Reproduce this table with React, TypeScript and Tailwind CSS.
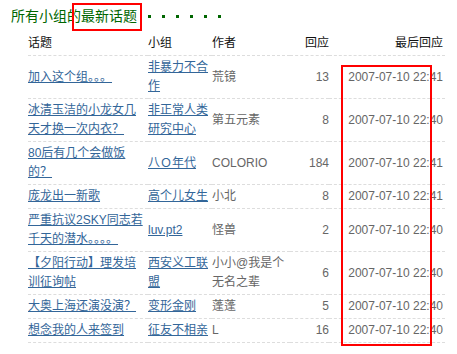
type Topic = {
  title: string;
  group: string;
  author: string;
  replies: number;
  last: string;
};

const topics: Topic[] = [
  { title: '加入这个组。。。', group: '非暴力不合作', author: '荒镜', replies: 13, last: '2007-07-10 22:41' },
  { title: '冰清玉洁的小龙女几天才换一次内衣？', group: '非正常人类研究中心', author: '第五元素', replies: 8, last: '2007-07-10 22:40' },
  { title: '80后有几个会做饭的？', group: '八Ｏ年代', author: 'COLORIO', replies: 184, last: '2007-07-10 22:41' },
  { title: '庞龙出一新歌', group: '高个儿女生', author: '小北', replies: 8, last: '2007-07-10 22:41' },
  { title: '严重抗议2SKY同志若千天的潜水。。。。', group: 'luv.pt2', author: '怪兽', replies: 2, last: '2007-07-10 22:40' },
  { title: '【夕阳行动】理发培训征询帖', group: '西安义工联盟', author: '小小@我是个无名之辈', replies: 6, last: '2007-07-10 22:40' },
  { title: '大奥上海还演没演？', group: '变形金刚', author: '蓬蓬', replies: 5, last: '2007-07-10 22:40' },
  { title: '想念我的人来签到', group: '征友不相亲', author: 'L', replies: 16, last: '2007-07-10 22:40' },
];

const cell = 'py-[2px] border-b border-dashed border-[#dddddd] align-middle';

function App() {
  return (
    <div className="relative w-[457px] h-[354px] bg-white text-[12px] leading-[19px] font-['Liberation_Sans','Noto_Sans_CJK_SC',sans-serif] overflow-hidden">
      <h2 className="h-[32px] pl-[11px] flex items-center text-[14px] font-normal text-[#006600]">
        所有小组的最新话题
        <span className="ml-[11px] flex gap-[11px]">
          {[...Array(6)].map((_, i) => (
            <span key={i} className="w-[3px] h-[3px] bg-[#006600]" />
          ))}
        </span>
      </h2>

      <table className="ml-[28px] w-[417px] table-fixed border-collapse">
        <colgroup>
          <col className="w-[120px]" />
          <col className="w-[64px]" />
          <col className="w-[78px]" />
          <col className="w-[39px]" />
          <col className="w-[116px]" />
        </colgroup>
        <thead>
          <tr className="text-[#111111]">
            <th className={`${cell} text-left font-normal`}>话题</th>
            <th className={`${cell} text-left font-normal`}>小组</th>
            <th className={`${cell} text-left font-normal`}>作者</th>
            <th className={`${cell} text-right font-normal`}>回应</th>
            <th className={`${cell} text-right font-normal pr-[2px]`}>最后回应</th>
          </tr>
        </thead>
        <tbody>
          {topics.map((t, i) => (
            <tr key={i}>
              <td className={`${cell} pr-[4px]`}>
                <a href="#" className="text-[#336699] underline">{t.title}</a>
              </td>
              <td className={`${cell} pr-[2px]`}>
                <a href="#" className="text-[#336699] underline">{t.group}</a>
              </td>
              <td className={`${cell} pr-[4px] text-[#666666]`}>{t.author}</td>
              <td className={`${cell} text-right text-[#666666]`}>{t.replies}</td>
              <td className={`${cell} text-right pr-[2px] text-[#666666]`}>{t.last}</td>
            </tr>
          ))}
        </tbody>
      </table>

      {/* red highlight marks */}
      <div className="absolute left-[72px] top-[3px] w-[70px] h-[28px] border-2 border-[#ff0000]" />
      <div className="absolute left-[341px] top-[65px] w-[91px] h-[281px] border-2 border-[#ff0000]" />
    </div>
  );
}

export default App;
